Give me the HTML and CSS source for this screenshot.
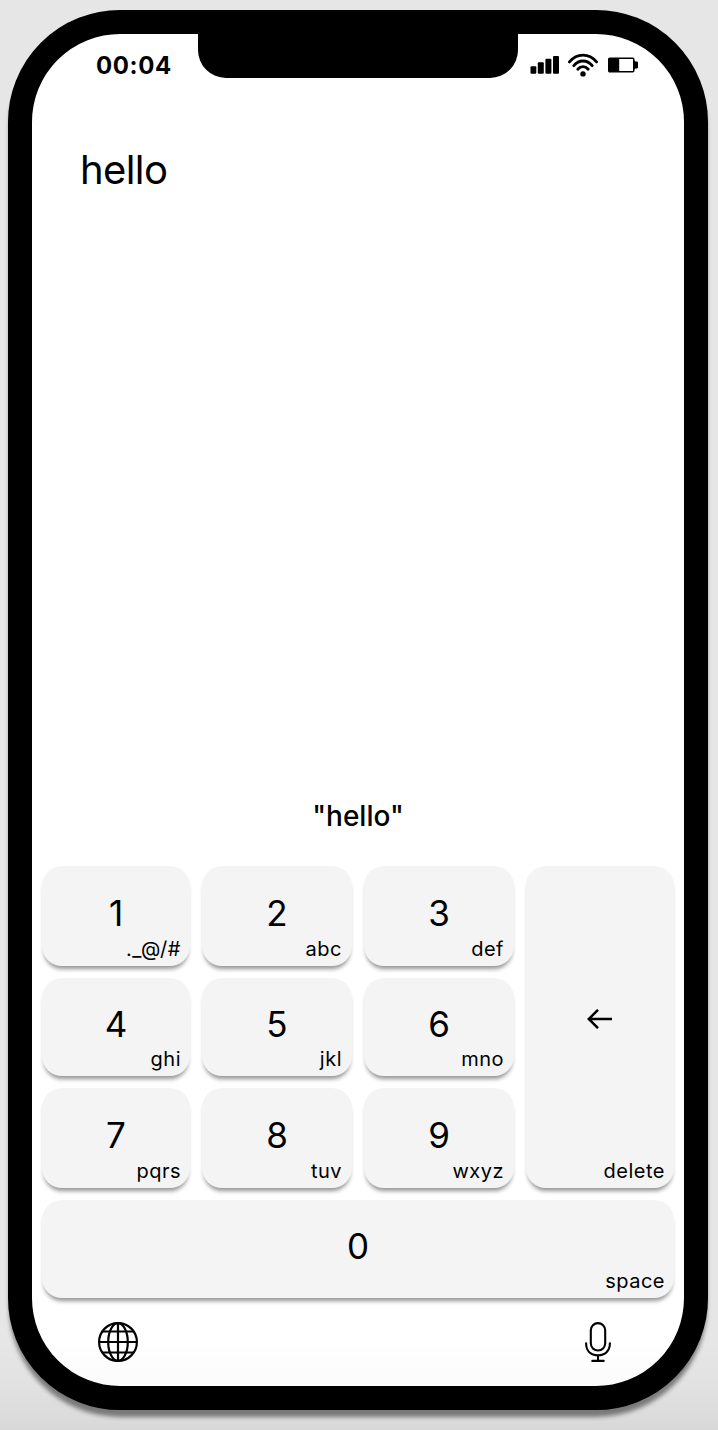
FILE: index.html
```html
<!DOCTYPE html>
<html lang="en">
<head>
<meta charset="utf-8">
<title>Keypad</title>
<link rel="stylesheet" href="styles.css">
</head>
<body>
<main class="phone">
  <div class="notch"></div>
  <header class="status">
    <span class="time">00:04</span>
    <div class="indicators">
      <svg class="signal" width="30" height="20" viewBox="0 0 30 20"><rect x=".5" y="11.2" width="5.8" height="7.6" rx="1"/><rect x="7.8" y="7.2" width="6" height="11.6" rx="1"/><rect x="15.4" y="3.7" width="6" height="15.1" rx="1"/><rect x="23" y="1" width="6" height="17.8" rx="1"/></svg>
      <svg class="wifi" width="30" height="24" viewBox="0 0 30 24"><g fill="none" stroke="#000" stroke-width="2.9" stroke-linecap="round"><path d="M1.5 8.9C9-.1 21-.1 28.5 8.9"/><path d="M5.8 12.7C11 6.4 19 6.4 24.2 12.7"/><path d="M9.8 16.2C12.8 12.7 17.2 12.7 20.2 16.2"/></g><circle cx="15" cy="20.9" r="2.7"/></svg>
      <svg class="battery" width="30" height="16" viewBox="0 0 30 16"><rect x=".7" y="1.2" width="25.1" height="13.6" rx="1" fill="none" stroke="#000" stroke-width="1.4"/><path d="M1 1h10.2v14H1zM25 2l2.3 2.5H29q1 0 1 1v5q0 1-1 1h-1.7L25 14z"/></svg>
    </div>
  </header>
  <section class="message">hello</section>
  <div class="suggestion">"hello"</div>
  <section class="keypad">
    <div class="key"><span class="digit">1</span><span class="letters">._@/#</span></div>
    <div class="key mid"><span class="digit">2</span><span class="letters">abc</span></div>
    <div class="key mid"><span class="digit">3</span><span class="letters">def</span></div>
    <div class="key delete"><svg class="arrow" width="26" height="20" viewBox="0 0 26 20"><path d="M25 10H1.8M11 .8 1.8 10l9.2 9.2" fill="none" stroke="#000" stroke-width="2.5"/></svg><span class="letters">delete</span></div>
    <div class="key"><span class="digit">4</span><span class="letters">ghi</span></div>
    <div class="key mid"><span class="digit">5</span><span class="letters">jkl</span></div>
    <div class="key mid"><span class="digit">6</span><span class="letters">mno</span></div>
    <div class="key"><span class="digit">7</span><span class="letters">pqrs</span></div>
    <div class="key mid"><span class="digit">8</span><span class="letters">tuv</span></div>
    <div class="key mid"><span class="digit">9</span><span class="letters">wxyz</span></div>
    <div class="key space"><span class="digit">0</span><span class="letters">space</span></div>
  </section>
  <footer class="tools">
    <svg width="40" height="40" viewBox="0 0 40 40" fill="none" stroke="#000" stroke-width="2.2"><circle cx="20" cy="20" r="18.9"/><ellipse cx="20" cy="20" rx="9.8" ry="18.9"/><path d="M20 1v38M1 20h38M4.5 9.5h31M4.5 30.5h31"/></svg>
    <svg width="28" height="40" viewBox="0 0 28 40" fill="none" stroke="#000" stroke-width="2.1" stroke-linecap="round"><rect x="6.8" y="1.1" width="14.4" height="27.4" rx="7.2"/><path d="M2.1 21.3C2.1 29 7 33.2 14 33.2S25.9 29 25.9 21.3M14 33.2V39M8.3 38.9h11.4"/></svg>
  </footer>
</main>
</body>
</html>
```
FILE: styles.css
```css
* { box-sizing: border-box; }
body {
  margin: 0;
  height: 1430px;
  padding: 10px 10px 20px 8px;
  overflow: hidden;
  background: #e6e6e6;
  font-family: Inter, "Liberation Sans", sans-serif;
  color: #000;
}
/* soft shade along the bottom edge of the window */
body::after {
  content: "";
  position: fixed;
  inset: auto 0 0;
  height: 90px;
  background: linear-gradient(rgba(0,0,0,0), rgba(0,0,0,.015) 50%, rgba(0,0,0,.06));
  pointer-events: none;
}
.phone {
  position: relative;
  display: flex;
  flex-direction: column;
  width: 700px;
  height: 1400px;
  border: 24px solid #000;
  border-radius: 112px;
  background: #fff;
  box-shadow: 0 8px 4px -1px rgba(0,0,0,.45);
}
.notch {
  position: absolute;
  top: -1px;
  left: 166px;
  width: 320px;
  height: 45px;
  border-radius: 0 0 28px 28px;
  background: #000;
}
.status {
  display: flex;
  justify-content: space-between;
  align-items: center;
  height: 62px;
  padding: 0 46px 0 64px;
}
.time { padding-top: 2px; font-size: 24px; font-weight: 650; letter-spacing: .6px; line-height: 30px; }
.indicators { display: flex; align-items: center; }
.signal { margin-right: 8px; }
.wifi { margin-right: 10px; }
.message { height: 690px; padding: 50px 48px 0; font-size: 40px; line-height: 48px; letter-spacing: -.6px; }
.suggestion {
  height: 80px;
  padding-top: 12px;
  text-align: center;
  font-size: 28px;
  font-weight: 500;
  line-height: 36px;
}
.keypad {
  display: grid;
  grid-template-columns: 148px 150px 150px 148px;
  grid-template-rows: 100px 98px 100px 98px;
  gap: 12px;
  padding: 0 10px;
}
.key {
  display: grid;
  place-items: center;
  border-radius: 20px;
  background: #f4f4f4;
  box-shadow: 0 5px 4px -2px rgba(0,0,0,.42);
}
.key > * { grid-area: 1 / 1; }
.delete { grid-column: 4; grid-row: 1 / 4; }
.space { grid-column: 1 / -1; }
.digit { font-size: 35px; line-height: 44px; padding-bottom: 6px; }
.arrow { margin-top: -17px; }
.letters {
  place-self: end;
  padding: 0 9px 5px;
  font-size: 20px;
  line-height: 24px;
  letter-spacing: .5px;
}
.mid .letters { padding-right: 10px; }
.tools { display: flex; justify-content: space-between; padding: 24px 72px 0 66px; }
```
